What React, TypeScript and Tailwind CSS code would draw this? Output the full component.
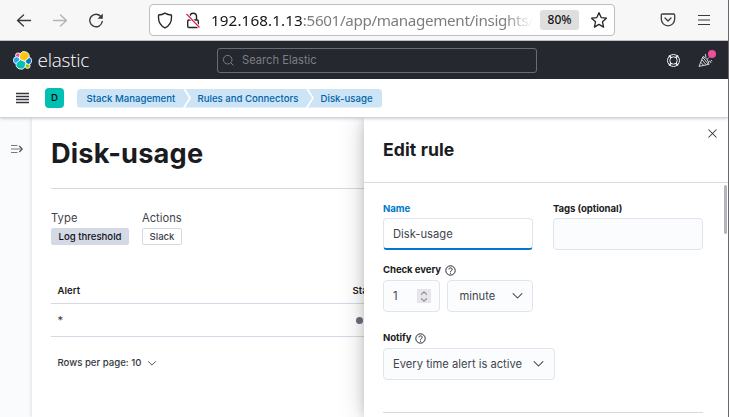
import React from "react";

const Chevron = ({ className, width = 1.05 }: { className: string; width?: number }) => (
  <svg viewBox="0 0 10 6" fill="none" stroke="currentColor" strokeWidth={width} className={className}>
    <path d="M.6.6 5 5 9.4.6" strokeLinecap="round" strokeLinejoin="round" />
  </svg>
);

const Help = () => (
  <svg width="11" height="11" viewBox="0 0 11 11" fill="none" stroke="#25282f" strokeWidth="1">
    <circle cx="5.5" cy="5.5" r="4.7" />
    <path d="M3.9 4.4c0-2.100 3.300-2 3.300 0 0 1.200-1.700 1.200-1.700 2.400M5.500 7.700v1.100" />
  </svg>
);

const Label = ({ children, className = "" }: { children: React.ReactNode; className?: string }) => (
  <div className={`flex h-3 items-center text-[9.6px] leading-3 font-bold tracking-[-0.08px] whitespace-nowrap ${className}`}>{children}</div>
);

function BrowserBar() {
  return (
    <div className="flex h-[41px] shrink-0 items-center border-b border-[#c0c0c0] bg-[#f7f7f7] text-[#3b3b3f]">
      <svg className="ml-[16px] shrink-0" width="16" height="16" viewBox="0 0 16 16" fill="none" stroke="currentColor" strokeWidth="1.4" strokeLinecap="round" strokeLinejoin="round">
        <path d="M14.5 8.500H1.500M7.500 3 1.500 8.500l6 5.500" />
      </svg>
      <svg className="ml-[20px] shrink-0" width="16" height="16" viewBox="0 0 16 16" fill="none" stroke="#b4b4b6" strokeWidth="1.4" strokeLinecap="round" strokeLinejoin="round">
        <path d="M1.500 8.500h13M8.500 3l6 5.500-6 5.500" />
      </svg>
      <svg className="ml-[20px] shrink-0" width="16" height="16" viewBox="0 0 16 16" fill="none" stroke="currentColor" strokeWidth="1.4">
        <path d="M13.200 4.800A6.300 6.300 0 1 0 14.300 9.500" strokeLinecap="round" />
        <path d="M14.800 1.500v5.300H9.500z" fill="currentColor" stroke="none" />
      </svg>
      <div className="ml-[45px] flex h-8 w-[466px] shrink-0 items-center rounded-[4px] border border-[#bdbdbf] bg-white">
        <svg className="ml-[7px] shrink-0" width="16" height="17" viewBox="0 0 16 17" fill="none" stroke="#26262a" strokeWidth="1.35" strokeLinejoin="round">
          <path d="M8 1.100c2 1.200 4.200 1.800 6.400 1.900.6 5.300-1 10.200-6.400 12.900C2.600 13.200 1 8.300 1.600 3 3.800 2.900 6 2.300 8 1.100Z" />
        </svg>
        <svg className="ml-[12px] shrink-0" width="16" height="17" viewBox="0 0 16 17" fill="none">
          <rect x="2.700" y="8" width="10.600" height="7.500" rx="1.200" stroke="#26262a" strokeWidth="1.400" />
          <path d="M5 5V4.600C5 .2 11.500.2 11.500 4.600V8" stroke="#26262a" strokeWidth="1.400" />
          <path d="m1.500 2 13 13.500" stroke="white" strokeWidth="3" />
          <path d="m1.500 2 13 13.500" stroke="#e22850" strokeWidth="1.300" />
        </svg>
        <div className="ml-[10px] w-[322px] shrink-0 overflow-hidden font-['Noto_Sans',sans-serif] text-[15.2px] leading-6 tracking-[-0.34px] whitespace-nowrap text-[#7d7d80] [mask-image:linear-gradient(to_right,black_91%,transparent_100%)]">
          <span className="tracking-[0.12px] text-[#15141a]">192.168.1.13</span>:5601/app/management/insights/
        </div>
        <div className="ml-[7px] flex h-5 w-[39px] shrink-0 items-center justify-center rounded-[3px] bg-[#dedede] font-['Noto_Sans',sans-serif] text-[12px] font-medium text-[#15141a]">80%</div>
        <svg className="ml-[11px] shrink-0" width="18" height="18" viewBox="0 0 18 18" fill="none" stroke="#26262a" strokeWidth="1.3" strokeLinejoin="round">
          <path d="m9 1.700 2.200 4.900 5.200.6-3.900 3.600 1.100 5.300L9 13.400l-4.600 2.700 1.100-5.300-3.900-3.600 5.200-.6Z" />
        </svg>
      </div>
      <svg className="ml-[45px] shrink-0" width="16" height="14" viewBox="0 0 16 14" fill="none" stroke="currentColor" strokeWidth="1.3" strokeLinecap="round" strokeLinejoin="round">
        <path d="M2.500 1h11q1.200 0 1.200 1.200v3.900a6.700 6.700 0 0 1-13.400 0V2.200Q1.300 1 2.500 1ZM5 5l3 3 3-3" />
      </svg>
      <svg className="ml-[22px] shrink-0" width="12" height="12" viewBox="0 0 12 12" stroke="currentColor" strokeWidth="1.2">
        <path d="M0 1.500h12M0 6h12M0 10.500h12" />
      </svg>
    </div>
  );
}

function ElasticHeader() {
  return (
    <div className="flex h-[38px] shrink-0 items-center bg-[#25282f]">
      <svg className="ml-[13px] shrink-0" width="19" height="19" viewBox="0 0 32 32" stroke="white" strokeWidth="1.5">
        <circle cx="8.500" cy="7.500" r="4.300" fill="#f04e98" />
        <ellipse cx="6.200" cy="15.500" rx="5.500" ry="5.800" fill="#1ba9f5" />
        <circle cx="24.500" cy="25" r="4.300" fill="#93c90e" />
        <ellipse cx="26" cy="16.500" rx="5.400" ry="6" fill="#0077cc" />
        <path d="m11.300 13.600 8.300 3.900 7.500-6.600A8.400 8.400 0 0 0 12 4.500L10.500 11.800Z" fill="#fec514" />
        <path d="m21 18.400-8.600-3.900-7.200 6.500A8.400 8.400 0 0 0 20 27.600l1.500-7.700Z" fill="#00bfb3" />
      </svg>
      <div className="ml-[5.5px] w-[54px] shrink-0 font-['Open_Sans',sans-serif] text-[19px] leading-[38px] font-light tracking-[-0.25px] text-white">elastic</div>
      <div className="ml-[125px] flex h-[25px] w-[320px] shrink-0 items-center rounded-[3px] border border-[#696c72] text-[#7b7e84]">
        <svg className="ml-[4px]" width="13" height="13" viewBox="0 0 13 13" fill="none" stroke="currentColor">
          <circle cx="5.700" cy="5.700" r="4.300" />
          <path d="m9 9 2.500 2.500" />
        </svg>
        <span className="ml-[7.5px] text-[11.2px]">Search Elastic</span>
      </div>
      <svg className="ml-[129px] shrink-0" width="15" height="15" viewBox="0 0 15 15" fill="none" stroke="#eef0f4">
        <circle cx="7.500" cy="7.500" r="6" />
        <circle cx="7.500" cy="7.500" r="3.700" />
        <path d="m3 2.500 2.300 2.400M12 2.500 9.700 4.900M3 12.500l2.300-2.400M12 12.500l-2.300-2.400" strokeWidth="1.700" />
      </svg>
      <div className="relative ml-[17px] h-[17px] w-[18px] shrink-0">
        <svg width="18" height="17" viewBox="0 0 18 17" fill="none" stroke="#e4e6eb" strokeWidth="0.9" strokeLinejoin="round">
          <path d="M5 4.500c3.500 1.200 5.500 4.500 6 7.800L1 14.400ZM3.800 7.700l4.300 5M2.800 10.300l2.700 3M4.700 5.400l5.600 6.800M8 5.500 7.300 2M9 7.400l2-2M10.500 9.500c1.500-1 2.700.1 2.200 1.500M13 8.200l1.200 1" />
        </svg>
        <span className="absolute top-[-2px] right-0 size-2 rounded-full bg-[#f04e98]" />
      </div>
    </div>
  );
}

function Breadcrumbs() {
  return (
    <div className="relative z-20 flex h-[39px] shrink-0 items-center border-b border-[#d0d3dd] bg-white shadow-[0_1px_3px_rgba(60,65,80,0.22)]">
      <svg className="ml-[16px] shrink-0" width="13" height="12" viewBox="0 0 13 12" stroke="#343741" strokeWidth="1.3">
        <path d="M0 1.500h13M0 4.500h13M0 7.500h13M0 10.500h13" />
      </svg>
      <div className="ml-4 flex h-5 w-[19px] shrink-0 items-center justify-center rounded-[4px] bg-[#00bfb3] text-[9.6px] font-medium text-black">D</div>
      <div className="ml-[13px] flex h-[19px] text-[9.6px] leading-[20px] font-medium whitespace-nowrap text-[#0063a8]">
        <span className="w-[112px] rounded-l-[4px] bg-[#cce4f5] pl-[9.5px] tracking-[0.01px] [clip-path:polygon(0_0,94.6%_0,100%_50%,94.6%_100%,0_100%)]">Stack Management</span>
        <span className="-ml-[4px] w-[127px] bg-[#cce4f5] pl-[12.5px] [clip-path:polygon(0_0,95.2%_0,100%_50%,95.2%_100%,0_100%,4.8%_50%)]">Rules and Connectors</span>
        <span className="-ml-[4px] w-[74px] rounded-r-[4px] bg-[#cce4f5] pl-[12.5px] tracking-[0.03px] [clip-path:polygon(0_0,100%_0,100%_100%,0_100%,8%_50%)]">Disk-usage</span>
      </div>
    </div>
  );
}

function RulePage() {
  return (
    <>
      <div className="flex w-8 shrink-0 justify-center bg-[#fafbfd] pt-[26px] pl-px">
        <svg width="12" height="10" viewBox="0 0 12 10" fill="none" stroke="#4a4d57">
          <path d="M0 1.500h6.500M0 5h11M0 8.500h6.500" strokeWidth="1.200" opacity=".75" />
          <path d="m8.300 2 3 3-3 3" strokeWidth="1.100" />
        </svg>
      </div>
      <main className="w-[332px] shrink-0 overflow-hidden bg-white pl-[19px] shadow-[0_0_4px_rgba(60,65,80,0.22)]">
        <h1 className="h-[71px] border-b border-[#d3dae6] pt-[20px] text-[27.2px] leading-8 font-bold tracking-[0.18px] text-[#1a1c21]">Disk-usage</h1>
        <div className="flex pt-[21px] text-[11.2px] leading-4 text-[#41444e]">
          <div className="w-[91px]">
            <div className="tracking-[0.08px]">Type</div>
            <div className="mt-[2px] flex h-[17px] w-[78px] items-center justify-center rounded-[2px] bg-[#d3dae6] text-[9.6px] font-medium whitespace-nowrap text-[#111218]">Log threshold</div>
          </div>
          <div>
            <div>Actions</div>
            <div className="mt-[2px] flex h-[17px] w-[40px] items-center justify-center rounded-[2px] border border-[#d3dae6] text-[9.6px] font-medium">Slack</div>
          </div>
        </div>
        <div className="mt-[33px] flex h-[26px] border-b border-[#d3dae6] pl-[6.5px] text-[9.6px] leading-[26px] font-semibold text-[#1a1c21]">
          <span className="w-[295px] shrink-0">Alert</span><span>Status</span>
        </div>
        <div className="flex h-[33px] items-center border-b border-[#d3dae6] pl-[6.5px] text-[11.2px] text-[#343741]">
          <span className="w-[298px] shrink-0 pt-[2px]">*</span><span className="size-[7px] shrink-0 rounded-full bg-[#69707d]" />
        </div>
        <div className="flex items-center pt-[20px] pl-[6.5px] text-[9.6px] leading-3 font-medium text-[#343741]">
          Rows per page: 10 <Chevron className="ml-[7px] h-[5px] w-[8px]" />
        </div>
      </main>
    </>
  );
}

function EditFlyout() {
  return (
    <aside className="relative z-10 flex min-w-0 grow flex-col bg-white text-[#1a1c21] shadow-[0_0_25px_rgba(0,0,0,0.2),0_0_9px_rgba(0,0,0,0.15)]">
      <div className="flex h-[65px] shrink-0 justify-between border-b border-[#d3dae6] pt-[10px] pr-[11px] pl-[19px]">
        <h2 className="pt-[10px] text-[17.6px] leading-6 font-bold tracking-[0.1px]">Edit rule</h2>
        <svg className="mt-[1px]" width="9" height="9" viewBox="0 0 9 9" stroke="#343741" strokeWidth="1.05"><path d="m.5.5 8 8M8.500.5l-8 8" /></svg>
      </div>
      <div className="flex min-h-0 grow justify-between">
        <div className="w-[339px] pt-[20px] pl-[19px]">
          <div className="flex gap-5">
            <div>
              <Label className="text-[#0077cc]">Name</Label>
              <div className="mt-[3px] flex h-8 w-[150px] items-center rounded-[4px] border border-b-2 border-[#e1e4ef] border-b-[#0077cc] bg-white pt-[2px] pl-[9px] text-[11.2px] text-[#41444e]">Disk-usage</div>
            </div>
            <div>
              <Label>Tags (optional)</Label>
              <div className="mt-[3px] h-8 w-[150px] rounded-[4px] border border-[#e1e4ef] bg-[#fbfcfd]" />
            </div>
          </div>
          <Label className="mt-[14px] gap-[4px]">Check every <Help /></Label>
          <div className="mt-[4px] flex gap-[7px] text-[11.2px] text-[#41444e]">
            <div className="flex h-8 w-[57px] items-center justify-between rounded-[4px] border border-[#e1e4ef] bg-[#fbfcfd] pr-[8px] pl-[9px]">
              <span>1</span>
              <div className="flex h-[14px] w-[14px] flex-col items-center justify-center gap-[3px] bg-[#e6e6ea] text-[#85878e]">
                <Chevron width={1.8} className="h-[4px] w-[6px] rotate-180" /><Chevron width={1.8} className="h-[4px] w-[6px]" />
              </div>
            </div>
            <div className="flex h-8 w-[86px] items-center justify-between rounded-[4px] border border-[#e1e4ef] bg-[#fbfcfd] pr-[9px] pl-[11.5px]">minute<Chevron className="h-[6px] w-[11px]" /></div>
          </div>
          <Label className="mt-[20px] gap-[4px]">Notify <Help /></Label>
          <div className="mt-[4px] flex h-8 w-[172px] items-center justify-between rounded-[4px] border border-[#e1e4ef] bg-[#fbfcfd] pr-[10px] pl-[9px] text-[11.2px] whitespace-nowrap text-[#41444e]">Every time alert is active<Chevron className="h-[6px] w-[11px]" /></div>
          <div className="mt-8 border-t border-[#d3dae6]" />
        </div>
        <div className="mt-[2px] mr-px h-[49px] w-[3px] rounded-full bg-[#b2b5be]" />
      </div>
    </aside>
  );
}

export default function App() {
  return (
    <div className="flex h-[417px] w-[729px] flex-col overflow-hidden border-r border-[#69696c] bg-white font-['Inter',sans-serif]">
      <BrowserBar />
      <ElasticHeader />
      <Breadcrumbs />
      <div className="flex min-h-0 grow">
        <RulePage />
        <EditFlyout />
      </div>
    </div>
  );
}
